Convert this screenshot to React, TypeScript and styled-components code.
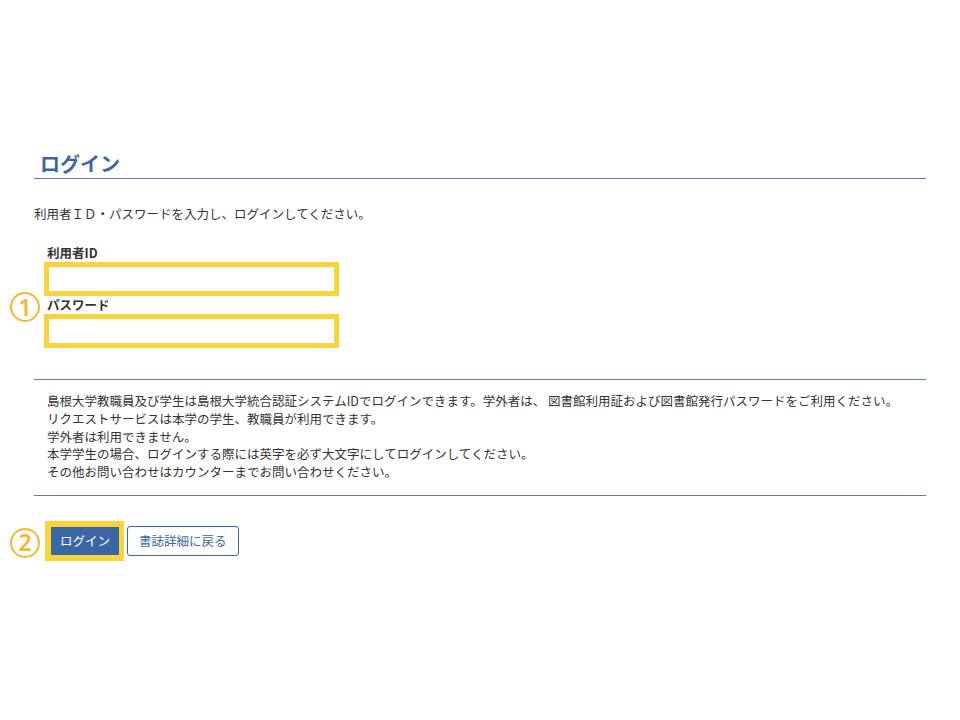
import styled, { createGlobalStyle } from "styled-components";

const GlobalStyle = createGlobalStyle`
  html, body {
    margin: 0;
    padding: 0;
    background: #ffffff;
  }
  body {
    font-family: "Noto Sans CJK JP", "Noto Sans", sans-serif;
    color: #333333;
    font-size: 12.5px;
  }
`;

const Page = styled.main`
  margin: 0 34px;
  padding-top: 147px;
  width: 892px;
`;

const Title = styled.h1`
  margin: 0;
  padding: 3px 6px 0;
  font-size: 20px;
  line-height: 28px;
  font-weight: 700;
  color: #3a66a6;
  border-bottom: 1px solid #5a7fb5;
`;

const Lead = styled.p`
  margin: 26px 0 0;
  font-size: 12.5px;
  line-height: 18px;
`;

const Form = styled.div`
  position: relative;
  padding: 22px 0 0 10px;
  display: flex;
  flex-direction: column;
`;

const Label = styled.label`
  display: block;
  padding-left: 3px;
  font-size: 12.5px;
  line-height: 16px;
  font-weight: 700;
  color: #333333;
`;

const Field = styled.input`
  box-sizing: border-box;
  width: 295px;
  height: 34px;
  margin: 1px 0 0;
  padding: 0 6px;
  border: 5px solid #f9d33b;
  background: #ffffff;
  outline: none;
  font-family: inherit;

  & + label {
    margin-top: 1px;
  }
`;

const Marker = styled.span<{ $top: number }>`
  position: absolute;
  left: -24px;
  top: ${(p) => p.$top}px;
  box-sizing: border-box;
  width: 30px;
  height: 30px;
  border: 2px solid #f3b82e;
  border-radius: 50%;
  display: flex;
  align-items: center;
  justify-content: center;
  color: #f3b82e;
  font-family: "Noto Sans", "Liberation Sans", sans-serif;
  font-size: 23px;
  line-height: 1;
  font-weight: 600;
`;

const Notice = styled.div`
  margin-top: 31px;
  padding: 12px 13px 14px;
  border-top: 1px solid #5a7fb5;
  border-bottom: 1px solid #5a7fb5;
  font-size: 12.5px;
  line-height: 17.75px;
`;

const Actions = styled.div`
  position: relative;
  margin-top: 25px;
  padding-left: 11px;
  display: flex;
  align-items: center;
  gap: 3px;
`;

const Highlight = styled.div`
  padding: 6px 5px 6px 6px;
  background: #f9d33b;
  display: flex;
`;

const Button = styled.button<{ $primary?: boolean }>`
  box-sizing: border-box;
  height: ${(p) => (p.$primary ? 28 : 30)}px;
  padding: 0 ${(p) => (p.$primary ? 8 : 11)}px;
  border: 1px solid #3a66a6;
  border-radius: ${(p) => (p.$primary ? 0 : 3)}px;
  background: ${(p) => (p.$primary ? "#3a66a6" : "#ffffff")};
  color: ${(p) => (p.$primary ? "#ffffff" : "#3a66a6")};
  font-family: inherit;
  font-size: 12.5px;
  line-height: 1;
  cursor: pointer;
`;

const notes = [
  "島根大学教職員及び学生は島根大学統合認証システムIDでログインできます。学外者は、 図書館利用証および図書館発行パスワードをご利用ください。",
  "リクエストサービスは本学の学生、教職員が利用できます。",
  "学外者は利用できません。",
  "本学学生の場合、ログインする際には英字を必ず大文字にしてログインしてください。",
  "その他お問い合わせはカウンターまでお問い合わせください。",
];

export default function App() {
  return (
    <>
      <GlobalStyle />
      <Page>
        <Title>ログイン</Title>
        <Lead>利用者ＩＤ・パスワードを入力し、ログインしてください。</Lead>
        <Form>
          <Marker $top={69}>1</Marker>
          <Label htmlFor="uid">利用者ID</Label>
          <Field id="uid" type="text" />
          <Label htmlFor="pw">パスワード</Label>
          <Field id="pw" type="password" />
        </Form>
        <Notice>
          {notes.map((n) => (
            <div key={n}>{n}</div>
          ))}
        </Notice>
        <Actions>
          <Marker $top={7}>2</Marker>
          <Highlight>
            <Button $primary>ログイン</Button>
          </Highlight>
          <Button>書誌詳細に戻る</Button>
        </Actions>
      </Page>
    </>
  );
}
